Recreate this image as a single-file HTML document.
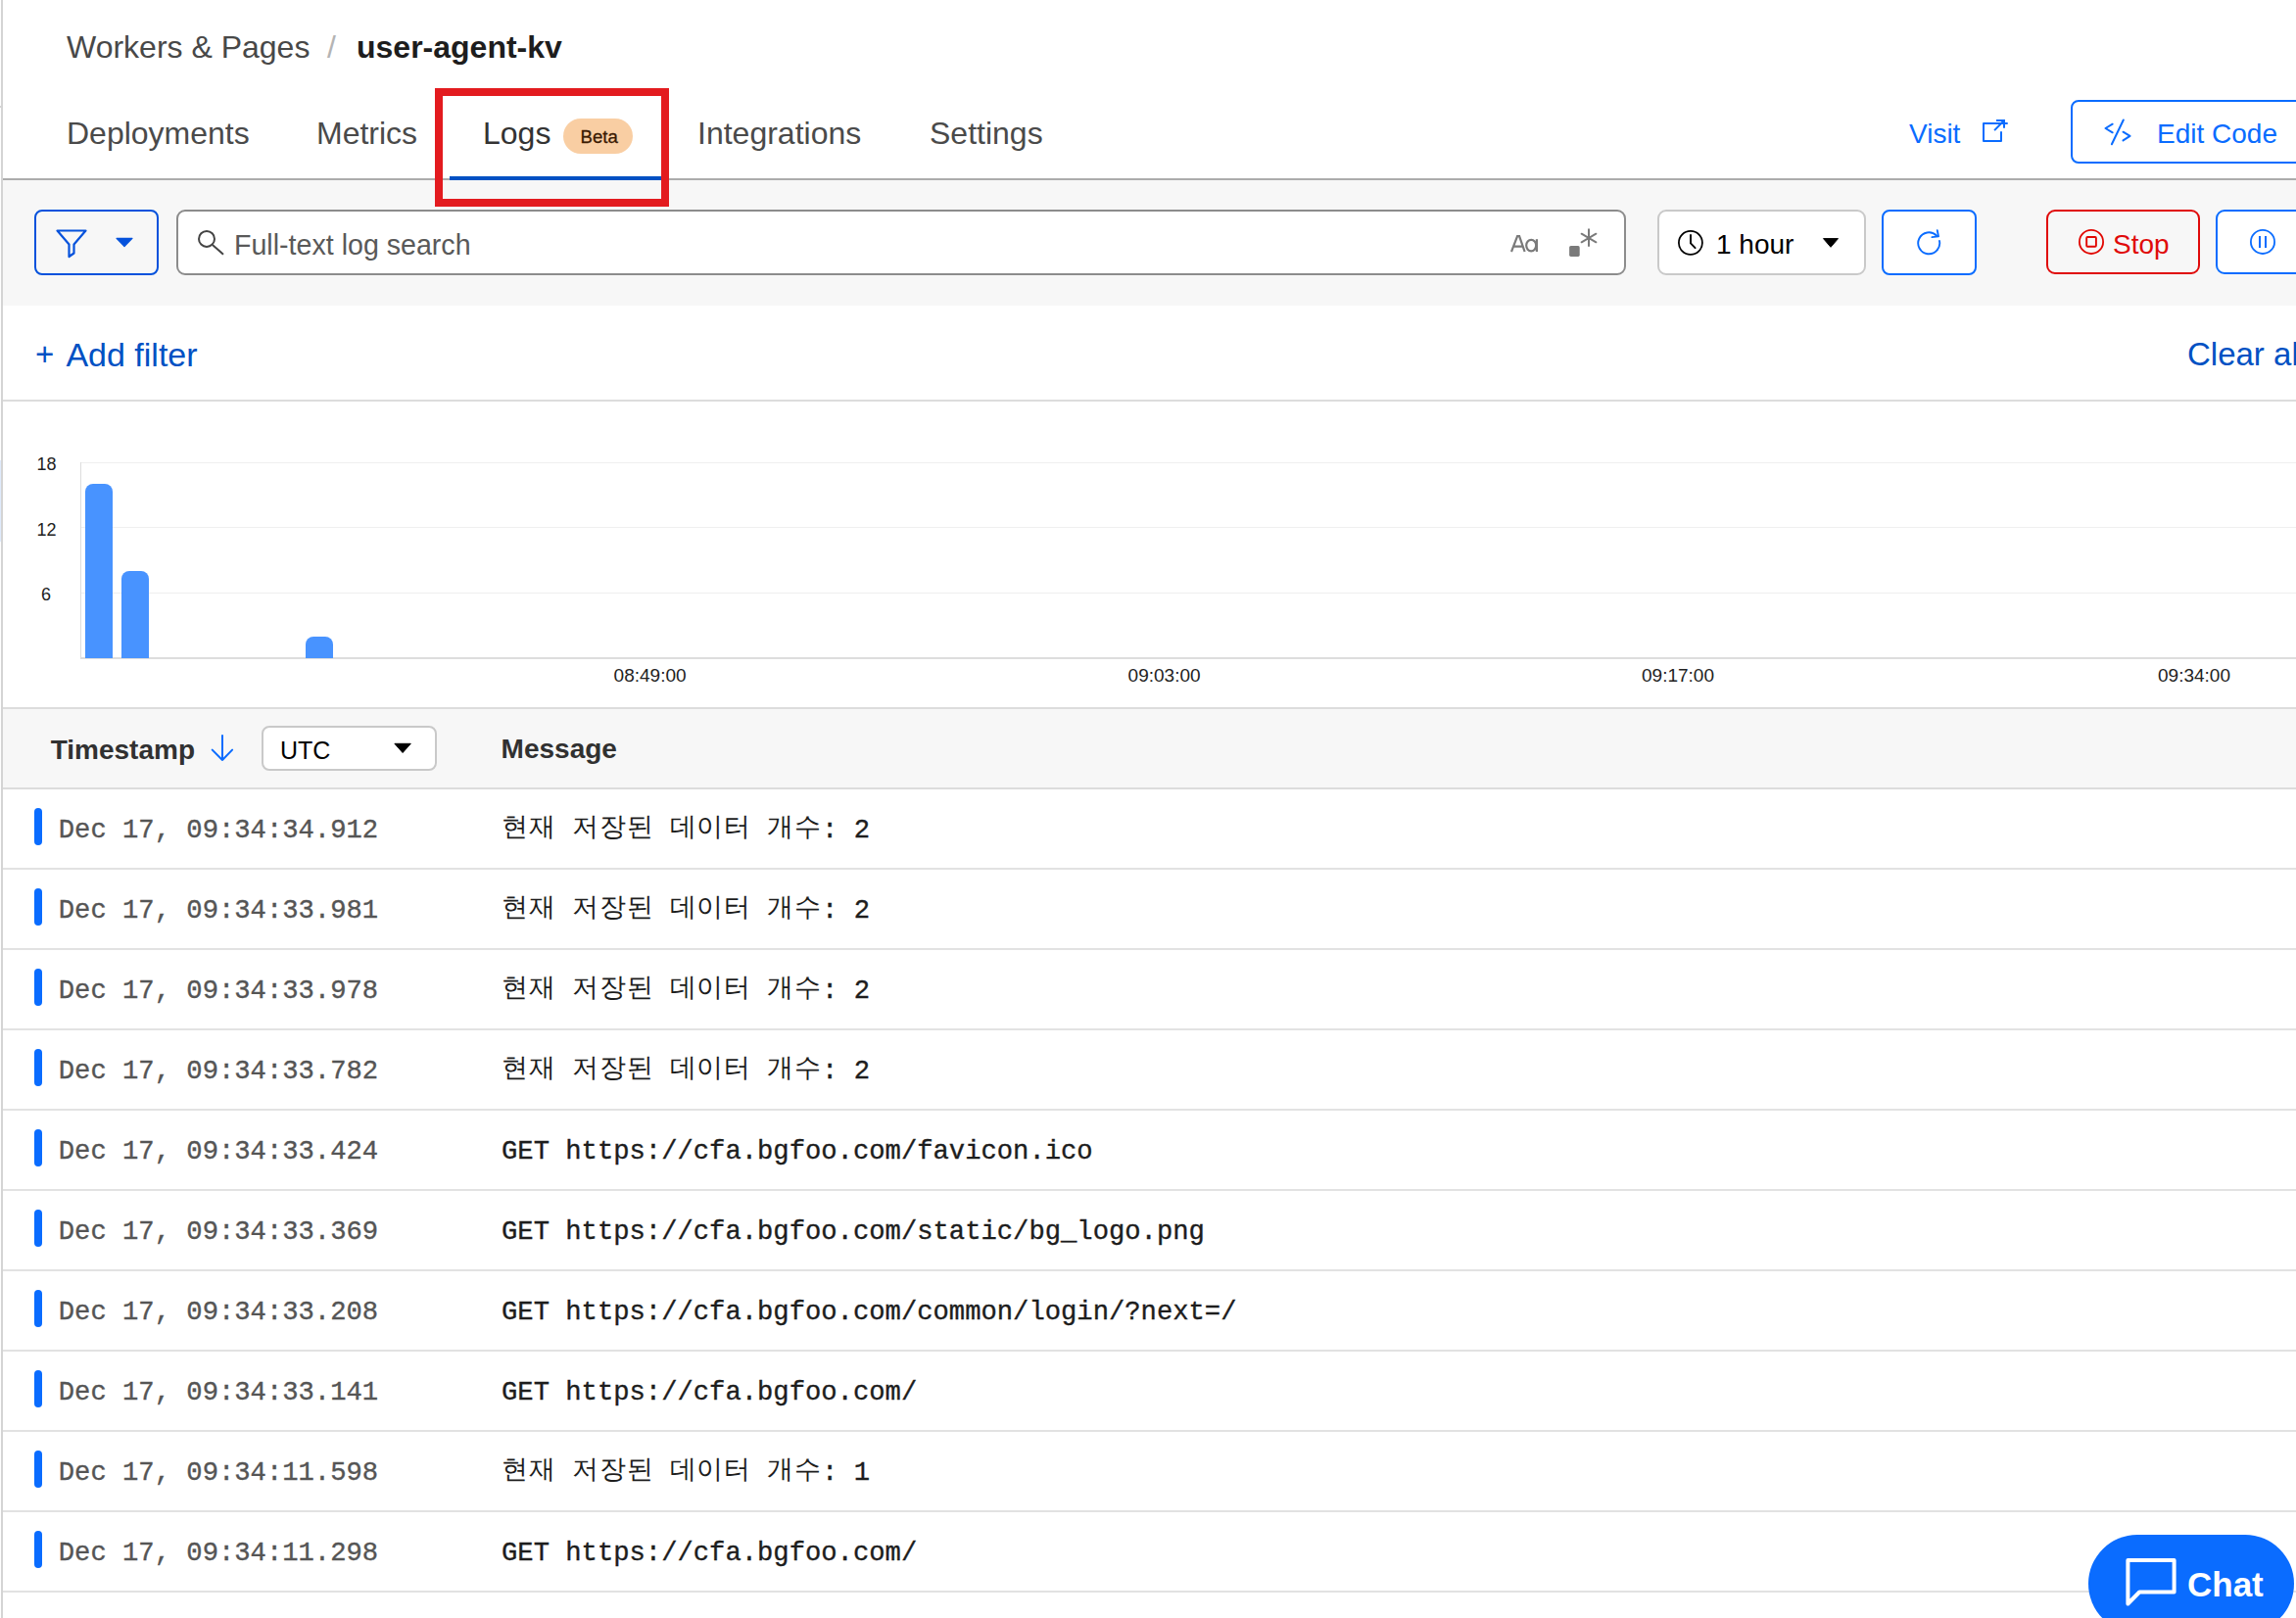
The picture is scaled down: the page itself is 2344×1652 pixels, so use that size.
<!DOCTYPE html>
<html><head><meta charset="utf-8"><title>Logs</title>
<style>
html,body{margin:0;padding:0;}
body{width:2344px;height:1652px;overflow:hidden;position:relative;background:#fff;font-family:'Liberation Sans', sans-serif;}
.t{position:absolute;white-space:nowrap;}
.r{position:absolute;display:block;}
.ko{letter-spacing:0.8px;-webkit-text-stroke:0;position:relative;top:-2px;}
</style></head><body>
<div class="r" style="left:1px;top:0px;width:2px;height:1652px;background:#d4d4d4"></div>
<div class="r" style="left:0px;top:108px;width:1px;height:2px;background:#d4d4d4"></div>
<div class="r" style="left:0px;top:470px;width:1px;height:83px;background:#dfeafc"></div>
<div class="t" style="left:68px;top:31.91px;font-size:32px;line-height:32px;color:#484848;font-weight:400;font-family:'Liberation Sans', sans-serif;">Workers &amp; Pages</div>
<div class="t" style="left:334px;top:31.91px;font-size:32px;line-height:32px;color:#b4b4b4;font-weight:400;font-family:'Liberation Sans', sans-serif;">/</div>
<div class="t" style="left:364px;top:31.91px;font-size:32px;line-height:32px;color:#1d1d1d;font-weight:700;font-family:'Liberation Sans', sans-serif;">user-agent-kv</div>
<div class="t" style="left:68px;top:119.91px;font-size:32px;line-height:32px;color:#4a4a4a;font-weight:400;font-family:'Liberation Sans', sans-serif;">Deployments</div>
<div class="t" style="left:323px;top:119.91px;font-size:32px;line-height:32px;color:#4a4a4a;font-weight:400;font-family:'Liberation Sans', sans-serif;">Metrics</div>
<div class="t" style="left:493px;top:119.91px;font-size:32px;line-height:32px;color:#333333;font-weight:400;font-family:'Liberation Sans', sans-serif;">Logs</div>
<div class="t" style="left:712px;top:119.91px;font-size:32px;line-height:32px;color:#4a4a4a;font-weight:400;font-family:'Liberation Sans', sans-serif;">Integrations</div>
<div class="t" style="left:949px;top:119.91px;font-size:32px;line-height:32px;color:#4a4a4a;font-weight:400;font-family:'Liberation Sans', sans-serif;">Settings</div>
<div class="r" style="left:575px;top:121px;width:71px;height:36px;background:#f9cea3;border-radius:18px"></div>
<div class="t" style="left:592.5px;top:130.76px;font-size:18.6px;line-height:18.6px;color:#3a1a02;font-weight:400;font-family:'Liberation Sans', sans-serif;-webkit-text-stroke:0.3px #3a1a02">Beta</div>
<div class="t" style="left:1949px;top:123.30px;font-size:28px;line-height:28px;color:#0a6cff;font-weight:400;font-family:'Liberation Sans', sans-serif;">Visit</div>
<svg class="r" style="left:2015px;top:110px" width="50" height="45" viewBox="0 0 50 45"><path d="M34.7 16 H10 V33.9 H28 V24.2" fill="none" stroke="#0a6cff" stroke-width="2" stroke-linejoin="round"/><path d="M21.1 23.1 L31 13 M23 12.9 H31 V20.7" fill="none" stroke="#0a6cff" stroke-width="2"/></svg>
<div class="r" style="left:2114px;top:102px;width:260px;height:65px;box-sizing:border-box;border:2px solid #0a6cff;border-radius:8px;background:#fff"></div>
<svg class="r" style="left:2135px;top:110px" width="50" height="45" viewBox="0 0 50 45"><path d="M21.7 16.7 L14.5 21 L21.7 25.3 M32.5 24.7 L39.5 28.9 L32.5 33.4 M32.8 12.5 L20.9 37.3" fill="none" stroke="#0a6cff" stroke-width="2" stroke-linecap="round" stroke-linejoin="round"/></svg>
<div class="t" style="left:2202px;top:123.30px;font-size:28px;line-height:28px;color:#0a6cff;font-weight:400;font-family:'Liberation Sans', sans-serif;">Edit Code</div>
<div class="r" style="left:3px;top:184px;width:2341px;height:128px;background:#f7f7f7"></div>
<div class="r" style="left:3px;top:182px;width:2341px;height:2px;background:#acacac"></div>
<div class="r" style="left:459px;top:180px;width:216px;height:4px;background:#0051c3"></div>
<div class="r" style="left:35px;top:214px;width:127px;height:67px;box-sizing:border-box;border:2px solid #0552dc;border-radius:8px"></div>
<svg class="r" style="left:30px;top:205px" width="120" height="80" viewBox="0 0 120 80"><path d="M28.5 30.5 H57.5 L45.5 44.5 V53.5 L40.5 57 V44.5 Z" fill="none" stroke="#0552dc" stroke-width="2.2" stroke-linejoin="round"/><path d="M89 38.4 H105 L97 46.6 Z" fill="#0552dc" stroke="#0552dc" stroke-width="1.2" stroke-linejoin="round"/></svg>
<div class="r" style="left:180px;top:214px;width:1480px;height:67px;box-sizing:border-box;border:2px solid #8c8c8c;border-radius:9px;background:#fff"></div>
<svg class="r" style="left:195px;top:225px" width="40" height="40" viewBox="0 0 40 40"><circle cx="16" cy="18.9" r="8" fill="none" stroke="#444" stroke-width="2"/><path d="M21.9 24.9 L33 34.7" stroke="#444" stroke-width="2"/></svg>
<div class="t" style="left:239px;top:235.79px;font-size:28.6px;line-height:28.6px;color:#595959;font-weight:400;font-family:'Liberation Sans', sans-serif;">Full-text log search</div>
<svg class="r" style="left:1530px;top:225px" width="110" height="45" viewBox="0 0 110 45"><path d="M13 32 L19.1 16.1 H21.1 L26.6 32 M15.4 26.6 H24.4" fill="none" stroke="#7a7a7a" stroke-width="2.2"/><ellipse cx="33.2" cy="25.6" rx="5" ry="5.8" fill="none" stroke="#7a7a7a" stroke-width="2.2"/><path d="M38.9 19.2 V32" stroke="#7a7a7a" stroke-width="2.2"/><rect x="72.1" y="26.1" width="10.6" height="10.8" rx="1.6" fill="#7a7a7a"/><path d="M92 9.3 V26.1 M84.6 13.7 L99.4 22.3 M84.6 22.3 L99.4 13.7" stroke="#7a7a7a" stroke-width="2" stroke-linecap="round"/></svg>
<div class="r" style="left:1692px;top:214px;width:213px;height:67px;box-sizing:border-box;border:2px solid #c9c9c9;border-radius:9px;background:#fff"></div>
<svg class="r" style="left:1700px;top:225px" width="60" height="45" viewBox="0 0 60 45"><circle cx="25.9" cy="22.9" r="12" fill="none" stroke="#000" stroke-width="1.8"/><path d="M26 15 V23.4 L30.6 28.1" fill="none" stroke="#000" stroke-width="1.9" stroke-linecap="round"/></svg>
<div class="t" style="left:1752px;top:235.90px;font-size:28px;line-height:28px;color:#000;font-weight:400;font-family:'Liberation Sans', sans-serif;">1 hour</div>
<svg class="r" style="left:1855px;top:235px" width="30" height="25" viewBox="0 0 30 25"><path d="M6.5 8.6 H21.5 L14 17.3 Z" fill="#000" stroke="#000" stroke-width="1" stroke-linejoin="round"/></svg>
<div class="r" style="left:1921px;top:214px;width:97px;height:67px;box-sizing:border-box;border:2px solid #0a6cff;border-radius:8px;background:#fff"></div>
<svg class="r" style="left:1945px;top:225px" width="50" height="45" viewBox="0 0 50 45"><path d="M35 21 A11 11 0 1 1 32 15.5" fill="none" stroke="#0a6cff" stroke-width="1.9" stroke-linecap="round"/><path d="M32.8 10.3 L34 16.4 L27.4 17.1" fill="none" stroke="#0a6cff" stroke-width="1.9" stroke-linecap="round" stroke-linejoin="round"/></svg>
<div class="r" style="left:2089px;top:214px;width:157px;height:66px;box-sizing:border-box;border:2px solid #e00a0a;border-radius:9px"></div>
<svg class="r" style="left:2110px;top:225px" width="50" height="45" viewBox="0 0 50 45"><circle cx="25" cy="21.9" r="12.1" fill="none" stroke="#e10600" stroke-width="1.8"/><rect x="20.2" y="17" width="9.7" height="9.8" rx="1" fill="none" stroke="#e10600" stroke-width="1.9"/></svg>
<div class="t" style="left:2157px;top:235.80px;font-size:28px;line-height:28px;color:#e00a0a;font-weight:400;font-family:'Liberation Sans', sans-serif;">Stop</div>
<div class="r" style="left:2262px;top:214px;width:120px;height:66px;box-sizing:border-box;border:2px solid #0a6cff;border-radius:9px;background:#fff"></div>
<svg class="r" style="left:2285px;top:225px" width="50" height="45" viewBox="0 0 50 45"><circle cx="25" cy="21.9" r="12.1" fill="none" stroke="#0a6cff" stroke-width="1.8"/><path d="M22 16 V28 M28 16 V28" stroke="#0a6cff" stroke-width="2"/></svg>
<div class="t" style="left:36px;top:345.47px;font-size:33px;line-height:33px;color:#0051c3;font-weight:400;font-family:'Liberation Sans', sans-serif;">+</div>
<div class="t" style="left:67.4px;top:344.62px;font-size:34px;line-height:34px;color:#0051c3;font-weight:400;font-family:'Liberation Sans', sans-serif;">Add filter</div>
<div class="t" style="left:2233px;top:345.47px;font-size:33px;line-height:33px;color:#0051c3;font-weight:400;font-family:'Liberation Sans', sans-serif;">Clear all</div>
<div class="r" style="left:3px;top:408px;width:2341px;height:2px;background:#dcdcdc"></div>
<div class="r" style="left:83px;top:472px;width:2261px;height:1px;background:#efefef"></div>
<div class="r" style="left:83px;top:538px;width:2261px;height:1px;background:#efefef"></div>
<div class="r" style="left:83px;top:605px;width:2261px;height:1px;background:#efefef"></div>
<div class="r" style="left:82px;top:472px;width:1px;height:200px;background:#dddddd"></div>
<div class="r" style="left:82px;top:671px;width:2262px;height:2px;background:#dddddd"></div>
<div class="t" style="left:37.5px;top:464.76px;font-size:18px;line-height:18px;color:#222;font-weight:400;font-family:'Liberation Sans', sans-serif;">18</div>
<div class="t" style="left:37.5px;top:531.76px;font-size:18px;line-height:18px;color:#222;font-weight:400;font-family:'Liberation Sans', sans-serif;">12</div>
<div class="t" style="left:42px;top:597.76px;font-size:18px;line-height:18px;color:#222;font-weight:400;font-family:'Liberation Sans', sans-serif;">6</div>
<div class="r" style="left:87px;top:494px;width:28px;height:178px;background:#4893ff;border-radius:8px 8px 0 0"></div>
<div class="r" style="left:124px;top:583px;width:28px;height:89px;background:#4893ff;border-radius:8px 8px 0 0"></div>
<div class="r" style="left:312px;top:650px;width:28px;height:22px;background:#4893ff;border-radius:8px 8px 0 0"></div>
<div class="t" style="left:626.6px;top:679.92px;font-size:19px;line-height:19px;color:#222;font-weight:400;font-family:'Liberation Sans', sans-serif;">08:49:00</div>
<div class="t" style="left:1151.6px;top:679.92px;font-size:19px;line-height:19px;color:#222;font-weight:400;font-family:'Liberation Sans', sans-serif;">09:03:00</div>
<div class="t" style="left:1676px;top:679.92px;font-size:19px;line-height:19px;color:#222;font-weight:400;font-family:'Liberation Sans', sans-serif;">09:17:00</div>
<div class="t" style="left:2203px;top:679.92px;font-size:19px;line-height:19px;color:#222;font-weight:400;font-family:'Liberation Sans', sans-serif;">09:34:00</div>
<div class="r" style="left:3px;top:722px;width:2341px;height:2px;background:#dcdcdc"></div>
<div class="r" style="left:3px;top:724px;width:2341px;height:81px;background:#f7f7f7"></div>
<div class="r" style="left:3px;top:804px;width:2341px;height:2px;background:#dcdcdc"></div>
<div class="t" style="left:51.7px;top:751.60px;font-size:28px;line-height:28px;color:#313131;font-weight:700;font-family:'Liberation Sans', sans-serif;">Timestamp</div>
<svg class="r" style="left:205px;top:740px" width="50" height="50" viewBox="0 0 50 50"><path d="M22 11 V36 M11.7 25.6 L22 36 L32.1 25.6" fill="none" stroke="#0a6cff" stroke-width="2" stroke-linecap="round" stroke-linejoin="round"/></svg>
<div class="r" style="left:267px;top:741px;width:179px;height:46px;box-sizing:border-box;border:2px solid #c9c9c9;border-radius:8px;background:#fff"></div>
<div class="t" style="left:286px;top:753.84px;font-size:25px;line-height:25px;color:#000;font-weight:400;font-family:'Liberation Sans', sans-serif;">UTC</div>
<svg class="r" style="left:395px;top:750px" width="30" height="25" viewBox="0 0 30 25"><path d="M7.9 9.3 H24.3 L16.1 18.5 Z" fill="#000" stroke="#000" stroke-width="1" stroke-linejoin="round"/></svg>
<div class="t" style="left:511.6px;top:751.30px;font-size:28px;line-height:28px;color:#313131;font-weight:700;font-family:'Liberation Sans', sans-serif;">Message</div>
<div class="r" style="left:35px;top:825px;width:8px;height:38px;background:#0a6cff;border-radius:4px"></div>
<div class="t" style="left:59.8px;top:834.35px;font-size:27.2px;line-height:27.2px;color:#555555;font-weight:400;font-family:'Liberation Mono', monospace;white-space:pre;-webkit-text-stroke:0.35px #555555">Dec 17, 09:34:34.912</div>
<div class="t" style="left:512px;top:834.35px;font-size:27.2px;line-height:27.2px;color:#1d1d1d;font-weight:400;font-family:'Liberation Mono', monospace;white-space:pre;-webkit-text-stroke:0.35px #1d1d1d"><span class="ko">현재</span> <span class="ko">저장된</span> <span class="ko">데이터</span> <span class="ko">개수</span>: 2</div>
<div class="r" style="left:3px;top:886px;width:2341px;height:2px;background:#e2e2e2"></div>
<div class="r" style="left:35px;top:907px;width:8px;height:38px;background:#0a6cff;border-radius:4px"></div>
<div class="t" style="left:59.8px;top:916.35px;font-size:27.2px;line-height:27.2px;color:#555555;font-weight:400;font-family:'Liberation Mono', monospace;white-space:pre;-webkit-text-stroke:0.35px #555555">Dec 17, 09:34:33.981</div>
<div class="t" style="left:512px;top:916.35px;font-size:27.2px;line-height:27.2px;color:#1d1d1d;font-weight:400;font-family:'Liberation Mono', monospace;white-space:pre;-webkit-text-stroke:0.35px #1d1d1d"><span class="ko">현재</span> <span class="ko">저장된</span> <span class="ko">데이터</span> <span class="ko">개수</span>: 2</div>
<div class="r" style="left:3px;top:968px;width:2341px;height:2px;background:#e2e2e2"></div>
<div class="r" style="left:35px;top:989px;width:8px;height:38px;background:#0a6cff;border-radius:4px"></div>
<div class="t" style="left:59.8px;top:998.35px;font-size:27.2px;line-height:27.2px;color:#555555;font-weight:400;font-family:'Liberation Mono', monospace;white-space:pre;-webkit-text-stroke:0.35px #555555">Dec 17, 09:34:33.978</div>
<div class="t" style="left:512px;top:998.35px;font-size:27.2px;line-height:27.2px;color:#1d1d1d;font-weight:400;font-family:'Liberation Mono', monospace;white-space:pre;-webkit-text-stroke:0.35px #1d1d1d"><span class="ko">현재</span> <span class="ko">저장된</span> <span class="ko">데이터</span> <span class="ko">개수</span>: 2</div>
<div class="r" style="left:3px;top:1050px;width:2341px;height:2px;background:#e2e2e2"></div>
<div class="r" style="left:35px;top:1071px;width:8px;height:38px;background:#0a6cff;border-radius:4px"></div>
<div class="t" style="left:59.8px;top:1080.35px;font-size:27.2px;line-height:27.2px;color:#555555;font-weight:400;font-family:'Liberation Mono', monospace;white-space:pre;-webkit-text-stroke:0.35px #555555">Dec 17, 09:34:33.782</div>
<div class="t" style="left:512px;top:1080.35px;font-size:27.2px;line-height:27.2px;color:#1d1d1d;font-weight:400;font-family:'Liberation Mono', monospace;white-space:pre;-webkit-text-stroke:0.35px #1d1d1d"><span class="ko">현재</span> <span class="ko">저장된</span> <span class="ko">데이터</span> <span class="ko">개수</span>: 2</div>
<div class="r" style="left:3px;top:1132px;width:2341px;height:2px;background:#e2e2e2"></div>
<div class="r" style="left:35px;top:1153px;width:8px;height:38px;background:#0a6cff;border-radius:4px"></div>
<div class="t" style="left:59.8px;top:1162.35px;font-size:27.2px;line-height:27.2px;color:#555555;font-weight:400;font-family:'Liberation Mono', monospace;white-space:pre;-webkit-text-stroke:0.35px #555555">Dec 17, 09:34:33.424</div>
<div class="t" style="left:512px;top:1162.35px;font-size:27.2px;line-height:27.2px;color:#1d1d1d;font-weight:400;font-family:'Liberation Mono', monospace;white-space:pre;-webkit-text-stroke:0.35px #1d1d1d">GET https://cfa.bgfoo.com/favicon.ico</div>
<div class="r" style="left:3px;top:1214px;width:2341px;height:2px;background:#e2e2e2"></div>
<div class="r" style="left:35px;top:1235px;width:8px;height:38px;background:#0a6cff;border-radius:4px"></div>
<div class="t" style="left:59.8px;top:1244.35px;font-size:27.2px;line-height:27.2px;color:#555555;font-weight:400;font-family:'Liberation Mono', monospace;white-space:pre;-webkit-text-stroke:0.35px #555555">Dec 17, 09:34:33.369</div>
<div class="t" style="left:512px;top:1244.35px;font-size:27.2px;line-height:27.2px;color:#1d1d1d;font-weight:400;font-family:'Liberation Mono', monospace;white-space:pre;-webkit-text-stroke:0.35px #1d1d1d">GET https://cfa.bgfoo.com/static/bg_logo.png</div>
<div class="r" style="left:3px;top:1296px;width:2341px;height:2px;background:#e2e2e2"></div>
<div class="r" style="left:35px;top:1317px;width:8px;height:38px;background:#0a6cff;border-radius:4px"></div>
<div class="t" style="left:59.8px;top:1326.35px;font-size:27.2px;line-height:27.2px;color:#555555;font-weight:400;font-family:'Liberation Mono', monospace;white-space:pre;-webkit-text-stroke:0.35px #555555">Dec 17, 09:34:33.208</div>
<div class="t" style="left:512px;top:1326.35px;font-size:27.2px;line-height:27.2px;color:#1d1d1d;font-weight:400;font-family:'Liberation Mono', monospace;white-space:pre;-webkit-text-stroke:0.35px #1d1d1d">GET https://cfa.bgfoo.com/common/login/?next=/</div>
<div class="r" style="left:3px;top:1378px;width:2341px;height:2px;background:#e2e2e2"></div>
<div class="r" style="left:35px;top:1399px;width:8px;height:38px;background:#0a6cff;border-radius:4px"></div>
<div class="t" style="left:59.8px;top:1408.35px;font-size:27.2px;line-height:27.2px;color:#555555;font-weight:400;font-family:'Liberation Mono', monospace;white-space:pre;-webkit-text-stroke:0.35px #555555">Dec 17, 09:34:33.141</div>
<div class="t" style="left:512px;top:1408.35px;font-size:27.2px;line-height:27.2px;color:#1d1d1d;font-weight:400;font-family:'Liberation Mono', monospace;white-space:pre;-webkit-text-stroke:0.35px #1d1d1d">GET https://cfa.bgfoo.com/</div>
<div class="r" style="left:3px;top:1460px;width:2341px;height:2px;background:#e2e2e2"></div>
<div class="r" style="left:35px;top:1481px;width:8px;height:38px;background:#0a6cff;border-radius:4px"></div>
<div class="t" style="left:59.8px;top:1490.35px;font-size:27.2px;line-height:27.2px;color:#555555;font-weight:400;font-family:'Liberation Mono', monospace;white-space:pre;-webkit-text-stroke:0.35px #555555">Dec 17, 09:34:11.598</div>
<div class="t" style="left:512px;top:1490.35px;font-size:27.2px;line-height:27.2px;color:#1d1d1d;font-weight:400;font-family:'Liberation Mono', monospace;white-space:pre;-webkit-text-stroke:0.35px #1d1d1d"><span class="ko">현재</span> <span class="ko">저장된</span> <span class="ko">데이터</span> <span class="ko">개수</span>: 1</div>
<div class="r" style="left:3px;top:1542px;width:2341px;height:2px;background:#e2e2e2"></div>
<div class="r" style="left:35px;top:1563px;width:8px;height:38px;background:#0a6cff;border-radius:4px"></div>
<div class="t" style="left:59.8px;top:1572.35px;font-size:27.2px;line-height:27.2px;color:#555555;font-weight:400;font-family:'Liberation Mono', monospace;white-space:pre;-webkit-text-stroke:0.35px #555555">Dec 17, 09:34:11.298</div>
<div class="t" style="left:512px;top:1572.35px;font-size:27.2px;line-height:27.2px;color:#1d1d1d;font-weight:400;font-family:'Liberation Mono', monospace;white-space:pre;-webkit-text-stroke:0.35px #1d1d1d">GET https://cfa.bgfoo.com/</div>
<div class="r" style="left:3px;top:1624px;width:2341px;height:2px;background:#e2e2e2"></div>
<div class="r" style="left:2132px;top:1567px;width:210px;height:100px;background:#0a6cff;border-radius:50px"></div>
<svg class="r" style="left:2150px;top:1570px" width="100" height="82" viewBox="0 0 100 82"><path d="M22.4 23.1 H69.6 V55.5 H34.2 L22.4 67.5 Z" fill="none" stroke="#fff" stroke-width="4" stroke-linejoin="round"/></svg>
<div class="t" style="left:2233px;top:1600.37px;font-size:35px;line-height:35px;color:#fff;font-weight:700;font-family:'Liberation Sans', sans-serif;">Chat</div>
<div class="r" style="left:444px;top:90px;width:239px;height:121px;box-sizing:border-box;border:8px solid #e31b1f"></div>

</body></html>
